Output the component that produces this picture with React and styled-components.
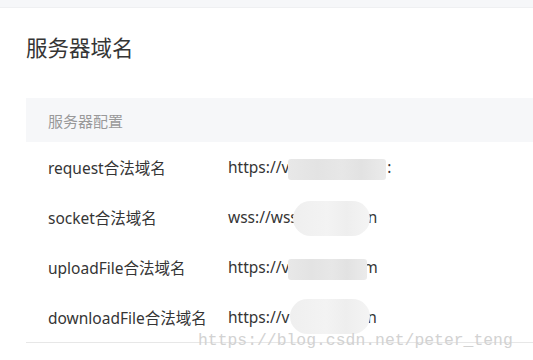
import React from 'react';
import styled, { createGlobalStyle } from 'styled-components';

const GlobalStyle = createGlobalStyle`
    html, body {
        margin: 0;
        padding: 0;
        background: #fff;
    }
    body {
        font-family: "Noto Sans", "Noto Sans CJK SC", sans-serif;
        color: #353535;
        overflow: hidden;
    }
`;

const Page = styled.div`
    position: relative;
    width: 533px;
    height: 360px;
    overflow: hidden;
`;

const TopBar = styled.div`
    height: 7px;
    background: #f6f7f9;
    border-bottom: 1px solid #eff0f2;
`;

const Title = styled.h2`
    margin: 0;
    padding: 21px 0 0 26px;
    height: 64px;
    box-sizing: border-box;
    font-family: "Noto Sans CJK SC", sans-serif;
    font-size: 21.5px;
    font-weight: 400;
    line-height: 36px;
    color: #353535;
`;

const Table = styled.div`
    margin: 26px 0 0 26px;
    border-bottom: 1px solid #e7e7e7;
`;

const Head = styled.div`
    height: 44px;
    display: flex;
    align-items: center;
    padding-left: 22px;
    background: #f6f7f9;
    font-family: "Noto Sans CJK SC", sans-serif;
    font-size: 15px;
    color: #999;
`;

const Row = styled.div`
    height: 50px;
    display: flex;
    align-items: center;
    padding-left: 22px;
    font-size: 15.5px;
    white-space: nowrap;
`;

const Label = styled.div`
    width: 180px;
    flex: none;
`;

const Value = styled.div`
    position: relative;
`;

const Gap = styled.span`
    display: inline-block;
    width: ${p => p.w}px;
`;

const Smudge = styled.span`
    position: absolute;
    top: ${p => p.top}px;
    left: ${p => p.left}px;
    width: ${p => p.w}px;
    height: ${p => p.h}px;
    border-radius: ${p => (p.round ? '18px' : '3px')};
    background: ${p => (p.round
        ? 'linear-gradient(90deg, #efefef, #f3f3f3 45%, #eeeeee 70%, #f4f4f4)'
        : 'linear-gradient(90deg, #e8e8e8, #e3e3e3 30%, #e7e7e7 55%, #e2e2e2 75%, #ebebeb)')};
`;

const Watermark = styled.div`
    position: absolute;
    left: 198px;
    top: 331px;
    font-family: "Liberation Mono", monospace;
    font-size: 16.4px;
    color: #d2d2d2;
`;

const rows = [
    { label: 'request合法域名', head: 'https://v', gap: 98, tail: ':', s: { left: 60, top: 3, w: 98, h: 21 } },
    { label: 'socket合法域名', head: 'wss://wss', gap: 70, tail: 'n', s: { left: 65, top: -5, w: 77, h: 35, round: true } },
    { label: 'uploadFile合法域名', head: 'https://v', gap: 74, tail: 'm', s: { left: 60, top: 3, w: 79, h: 21 } },
    { label: 'downloadFile合法域名', head: 'https://v', gap: 78, tail: 'n', s: { left: 62, top: -7, w: 80, h: 35, round: true } },
];

export default function App() {
    return (
        <Page>
            <GlobalStyle />
            <TopBar />
            <Title>服务器域名</Title>
            <Table>
                <Head>服务器配置</Head>
                {rows.map(r => (
                    <Row key={r.label}>
                        <Label>{r.label}</Label>
                        <Value>
                            {r.head}
                            <Gap w={r.gap} />
                            {r.tail}
                            <Smudge {...r.s} />
                        </Value>
                    </Row>
                ))}
            </Table>
            <Watermark>https://blog.csdn.net/peter_teng</Watermark>
        </Page>
    );
}
